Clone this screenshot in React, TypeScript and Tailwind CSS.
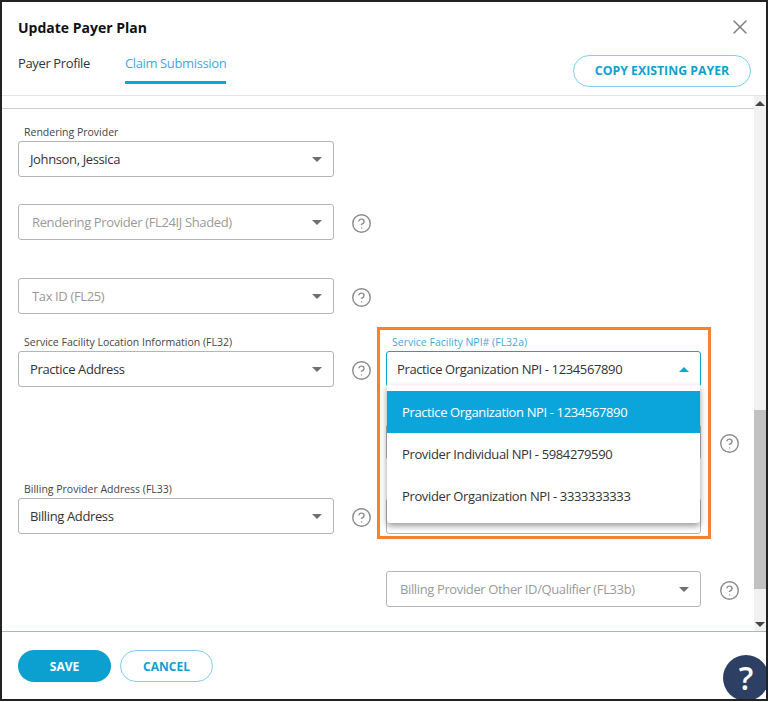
import { CircleHelp, X } from 'lucide-react';

interface FieldProps {
  label?: string;
  value: string;
  placeholder?: boolean;
  active?: boolean;
}

// caret used in every select
function Caret({ up = false, color = '#6f6f6f' }: { up?: boolean; color?: string }) {
  return (
    <svg width="10" height="5" viewBox="0 0 10 5" className="shrink-0">
      <path d={up ? 'M0 5 L5 0 L10 5 Z' : 'M0 0 L5 5 L10 0 Z'} fill={color} />
    </svg>
  );
}

function Field({ label, value, placeholder, active }: FieldProps) {
  return (
    <div className="flex flex-col">
      <div className={`h-[18px] pl-[6px] text-[10.5px] leading-[18px] ${active ? 'text-[#3fa9dc]' : 'text-[#444]'}`}>
        {label}
      </div>
      <div
        className={`flex h-[36px] items-center justify-between rounded-[3px] border bg-white pr-[11px] text-[13px] tracking-[-0.37px] ${
          active ? 'border-[#0ba5d6] pl-[10px]' : 'border-[#b5b5b5] pl-[11px]'
        } ${placeholder ? 'pl-[13px] text-[#9a9a9a]' : 'text-[#333]'}`}
      >
        <span className="pt-[1px]">{value}</span>
        <Caret up={active} color={active ? '#0ba5d6' : '#6f6f6f'} />
      </div>
    </div>
  );
}

function Help() {
  return (
    <div className="flex h-[36px] items-center justify-center">
      <CircleHelp size={21} strokeWidth={1.6} className="text-[#8a8a8a]" />
    </div>
  );
}

function Row({ left, right, leftHelp, rightHelp, className }: { left?: FieldProps; right?: FieldProps; leftHelp?: boolean; rightHelp?: boolean; className?: string }) {
  return (
    <div className={`grid h-[54px] grid-cols-[316px_52px_315px_56px] ${className ?? ''}`}>
      <div>{left && <Field {...left} />}</div>
      <div className="pt-[19px] pl-[3px]">{leftHelp && <Help />}</div>
      <div>{right && <Field {...right} />}</div>
      <div className="pt-[19px]">{rightHelp && <Help />}</div>
    </div>
  );
}

const options = [
  'Practice Organization NPI - 1234567890',
  'Provider Individual NPI - 5984279590',
  'Provider Organization NPI - 3333333333',
];

export default function App() {
  return (
    <div className="relative flex h-[701px] w-[768px] flex-col overflow-hidden border-2 border-[#222] bg-white font-['Open_Sans',sans-serif]">
      {/* Header */}
      <div className="relative h-[94px] shrink-0 border-b border-[#e4e4e4] px-[16px]">
        <h1 className="pt-[16px] text-[14px] leading-[20px] font-bold text-[#111]">Update Payer Plan</h1>
        <button className="absolute top-[13px] right-[14px] text-[#808080]" aria-label="Close">
          <X size={24} strokeWidth={1.5} />
        </button>
        <div className="mt-[16px] flex gap-[35px] text-[13px] leading-[19px] tracking-[-0.37px]">
          <div className="text-[#333]">Payer Profile</div>
          <div className="h-[30px] border-b-[3px] border-[#0ba5d6] text-[#3fa9dc]">Claim Submission</div>
        </div>
        <button className="absolute top-[53px] right-[15px] h-[32px] w-[178px] rounded-full border border-[#7fd0ea] text-[12.3px] font-bold text-[#0f9fd0]">
          COPY EXISTING PAYER
        </button>
      </div>

      {/* Scroll area */}
      <div className="flex min-h-0 flex-1">
        <div className="relative min-w-0 flex-1 px-[16px]">
          <div className="-mx-[16px] h-[13px] border-b border-[#cfcfcf]" />
          <Row className="mt-[14px]" left={{ label: 'Rendering Provider', value: 'Johnson, Jessica' }} />
          <Row className="mt-[9px]" left={{ value: 'Rendering Provider (FL24IJ Shaded)', placeholder: true }} leftHelp />
          <Row className="mt-[20px]" left={{ value: 'Tax ID (FL25)', placeholder: true }} leftHelp />
          <Row
            className="mt-[19px]"
            left={{ label: 'Service Facility Location Information (FL32)', value: 'Practice Address' }}
            leftHelp
            right={{ label: 'Service Facility NPI# (FL32a)', value: 'Practice Organization NPI - 1234567890', active: true }}
          />
          <Row className="mt-[19px]" right={{ value: '', placeholder: true }} rightHelp />
          <Row
            className="mt-[20px]"
            left={{ label: 'Billing Provider Address (FL33)', value: 'Billing Address' }}
            leftHelp
            right={{ value: '', placeholder: true }}
          />
          <Row className="mt-[19px]" right={{ value: 'Billing Provider Other ID/Qualifier (FL33b)', placeholder: true }} rightHelp />

          {/* Open dropdown */}
          <div className="absolute top-[289px] left-[385px] h-[138px] w-[313px] rounded-b-[3px] bg-white pt-[6px] shadow-[0_3px_6px_rgba(0,0,0,0.4)]">
            {options.map((option, i) => (
              <div
                key={option}
                className={`flex h-[42px] items-center pt-[1px] pl-[15px] text-[13px] tracking-[-0.37px] ${i === 0 ? 'bg-[#0ba5dc] text-white' : 'text-[#333]'}`}
              >
                {option}
              </div>
            ))}
          </div>
        </div>

        {/* Scrollbar */}
        <div className="flex w-[12px] shrink-0 flex-col items-center bg-[#f1f1f1]">
          <div className="flex h-[14px] w-full items-center justify-center"><Caret up color="#444" /></div>
          <div className="mt-[300px] h-[179px] w-full bg-[#c1c1c1]" />
          <div className="mt-auto flex h-[14px] w-full items-center justify-center"><Caret color="#444" /></div>
        </div>
      </div>

      {/* Footer */}
      <div className="flex h-[68px] shrink-0 gap-[9px] border-t border-[#74c9e8] px-[16px] pt-[18px]">
        <button className="h-[32px] w-[93px] rounded-full bg-[#0ba0d0] pt-[2px] text-[12px] font-bold text-white">SAVE</button>
        <button className="h-[32px] w-[93px] rounded-full border border-[#7fd0ea] pt-[2px] text-[12px] font-bold text-[#0f9fd0]">CANCEL</button>
      </div>

      {/* Orange annotation */}
      <div className="pointer-events-none absolute top-[325px] left-[375px] h-[212px] w-[334px] border-[3px] border-[#f58233]" />

      {/* Floating help */}
      <div className="absolute top-[653px] left-[721px] flex h-[46px] w-[46px] items-center justify-center rounded-full bg-[#2d4063] text-[32px] font-semibold text-white">
        ?
      </div>
    </div>
  );
}
